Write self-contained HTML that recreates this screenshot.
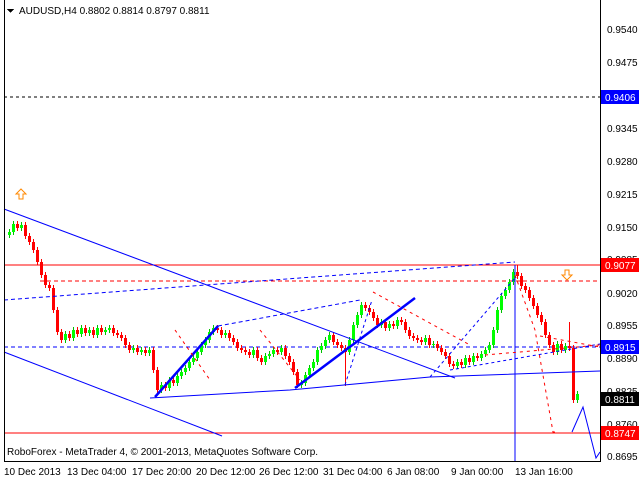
<!DOCTYPE html>
<html><head><meta charset="utf-8"><style>
body{margin:0;background:#fff;width:640px;height:480px;overflow:hidden}
svg text{font-family:"Liberation Sans",sans-serif;font-size:10px}
</style></head><body>
<svg width="640" height="480" xmlns="http://www.w3.org/2000/svg" shape-rendering="crispEdges">
<rect width="640" height="480" fill="#fff"/>
<line x1="4" y1="97" x2="600" y2="97" stroke="#000" stroke-dasharray="3,3"/>
<line x1="4" y1="265" x2="600" y2="265" stroke="#f00"/>
<line x1="4" y1="433" x2="600" y2="433" stroke="#f00"/>
<line x1="40" y1="281" x2="600" y2="281" stroke="#f00" stroke-dasharray="4,3"/>
<line x1="4" y1="347" x2="600" y2="347" stroke="#00f" stroke-dasharray="4,3"/>
<!-- green candles -->
<path stroke="#00c000" fill="none" d="M9.5 229V238M13.5 221V235M21.5 222V231M65.5 331V343M73.5 327V341M81.5 325V337M89.5 327V336M97.5 325V338M105.5 327V335M109.5 325V333M133.5 345V353M141.5 347V355M149.5 347V356M161.5 382V393M169.5 377V391M177.5 373V386M181.5 369V379M185.5 365V375M189.5 359V371M193.5 355V365M197.5 349V361M201.5 342V355M205.5 337V348M209.5 329V343M213.5 325V335M225.5 330V338M253.5 347V358M265.5 353V365M269.5 351V359M273.5 347V357M281.5 345V355M301.5 380V388M305.5 372V386M309.5 365V378M313.5 359V371M317.5 347V365M321.5 343V353M325.5 337V349M329.5 332V343M349.5 337V355M353.5 322V343M357.5 312V328M361.5 302V318M381.5 319V328M389.5 321V331M397.5 317V329M425.5 335V345M433.5 341V348M457.5 359V369M465.5 355V368M473.5 353V365M481.5 351V361M485.5 347V357M489.5 342V353M493.5 327V348M497.5 307V333M501.5 293V313M505.5 287V299M509.5 279V293M513.5 269V285M557.5 341V355M565.5 343V353M577.5 391V403"/>
<path fill="#00ff00" d="M8 232h3v3h-3zM12 224h3v8h-3zM20 225h3v3h-3zM64 334h3v6h-3zM72 330h3v8h-3zM80 328h3v6h-3zM88 330h3v3h-3zM96 328h3v7h-3zM104 330h3v2h-3zM108 328h3v2h-3zM132 348h3v2h-3zM140 350h3v2h-3zM148 350h3v3h-3zM160 385h3v5h-3zM168 380h3v8h-3zM176 376h3v7h-3zM180 372h3v4h-3zM184 368h3v4h-3zM188 362h3v6h-3zM192 358h3v4h-3zM196 352h3v6h-3zM200 345h3v7h-3zM204 340h3v5h-3zM208 332h3v8h-3zM212 328h3v4h-3zM224 333h3v2h-3zM252 350h3v5h-3zM264 356h3v6h-3zM268 354h3v2h-3zM272 350h3v4h-3zM280 348h3v4h-3zM300 383h3v2h-3zM304 375h3v8h-3zM308 368h3v7h-3zM312 362h3v6h-3zM316 350h3v12h-3zM320 346h3v4h-3zM324 340h3v6h-3zM328 335h3v5h-3zM348 340h3v12h-3zM352 325h3v15h-3zM356 315h3v10h-3zM360 305h3v10h-3zM380 322h3v3h-3zM388 324h3v4h-3zM396 320h3v6h-3zM424 338h3v4h-3zM432 344h3v1h-3zM456 362h3v4h-3zM464 358h3v7h-3zM472 356h3v6h-3zM480 354h3v4h-3zM484 350h3v4h-3zM488 345h3v5h-3zM492 330h3v15h-3zM496 310h3v20h-3zM500 296h3v14h-3zM504 290h3v6h-3zM508 282h3v8h-3zM512 272h3v10h-3zM556 344h3v8h-3zM564 346h3v4h-3zM576 394h3v6h-3z"/>
<!-- red candles -->
<path stroke="#f00" fill="none" d="M17.5 221V231M25.5 222V239M29.5 233V245M33.5 239V253M37.5 247V265M41.5 259V278M45.5 272V288M49.5 282V291M53.5 285V313M57.5 307V335M61.5 329V343M69.5 331V341M77.5 327V337M85.5 325V336M93.5 327V338M101.5 325V335M113.5 325V336M117.5 330V338M121.5 332V341M125.5 335V348M129.5 342V353M137.5 345V355M145.5 347V356M153.5 347V373M157.5 367V393M165.5 382V391M173.5 377V386M217.5 325V333M221.5 327V338M229.5 330V341M233.5 335V345M237.5 339V351M241.5 345V353M245.5 347V355M249.5 349V358M257.5 347V361M261.5 355V365M277.5 347V355M285.5 345V359M289.5 353V365M293.5 359V375M297.5 369V388M333.5 332V345M337.5 339V348M341.5 342V351M345.5 345V386M365.5 302V311M369.5 305V315M373.5 309V321M377.5 315V328M385.5 319V331M393.5 321V329M401.5 317V325M405.5 319V333M409.5 327V339M413.5 333V341M417.5 335V343M421.5 337V345M429.5 335V348M437.5 341V351M441.5 345V355M445.5 349V359M449.5 353V367M453.5 361V369M461.5 359V368M469.5 355V365M477.5 353V361M517.5 265V279M521.5 273V289M525.5 283V293M529.5 287V301M533.5 295V309M537.5 303V318M541.5 312V325M545.5 319V338M549.5 332V348M553.5 342V355M561.5 341V353M569.5 322V351M573.5 345V403"/>
<path fill="#f00" d="M16 224h3v4h-3zM24 225h3v11h-3zM28 236h3v6h-3zM32 242h3v8h-3zM36 250h3v12h-3zM40 262h3v13h-3zM44 275h3v10h-3zM48 285h3v3h-3zM52 288h3v22h-3zM56 310h3v22h-3zM60 332h3v8h-3zM68 334h3v4h-3zM76 330h3v4h-3zM84 328h3v5h-3zM92 330h3v5h-3zM100 328h3v4h-3zM112 328h3v5h-3zM116 333h3v2h-3zM120 335h3v3h-3zM124 338h3v7h-3zM128 345h3v5h-3zM136 348h3v4h-3zM144 350h3v3h-3zM152 350h3v20h-3zM156 370h3v20h-3zM164 385h3v3h-3zM172 380h3v3h-3zM216 328h3v2h-3zM220 330h3v5h-3zM228 333h3v5h-3zM232 338h3v4h-3zM236 342h3v6h-3zM240 348h3v2h-3zM244 350h3v2h-3zM248 352h3v3h-3zM256 350h3v8h-3zM260 358h3v4h-3zM276 350h3v2h-3zM284 348h3v8h-3zM288 356h3v6h-3zM292 362h3v10h-3zM296 372h3v13h-3zM332 335h3v7h-3zM336 342h3v3h-3zM340 345h3v3h-3zM344 348h3v4h-3zM364 305h3v3h-3zM368 308h3v4h-3zM372 312h3v6h-3zM376 318h3v7h-3zM384 322h3v6h-3zM392 324h3v2h-3zM400 320h3v2h-3zM404 322h3v8h-3zM408 330h3v6h-3zM412 336h3v2h-3zM416 338h3v2h-3zM420 340h3v2h-3zM428 338h3v7h-3zM436 344h3v4h-3zM440 348h3v4h-3zM444 352h3v4h-3zM448 356h3v8h-3zM452 364h3v2h-3zM460 362h3v3h-3zM468 358h3v4h-3zM476 356h3v2h-3zM516 272h3v4h-3zM520 276h3v10h-3zM524 286h3v4h-3zM528 290h3v8h-3zM532 298h3v8h-3zM536 306h3v9h-3zM540 315h3v7h-3zM544 322h3v13h-3zM548 335h3v10h-3zM552 345h3v7h-3zM560 344h3v6h-3zM568 346h3v2h-3zM572 348h3v52h-3z"/>
<g fill="none" stroke="#00f" shape-rendering="auto">
<line x1="4" y1="209" x2="455" y2="378"/>
<line x1="4" y1="352" x2="222" y2="436"/>
<line x1="4" y1="300" x2="515" y2="262" stroke-dasharray="4,3"/>
<polyline points="150,398 290,390 430,377 600,371"/>
<line x1="155" y1="397" x2="218" y2="326" stroke-width="2.5"/>
<line x1="295" y1="388" x2="415" y2="298" stroke-width="2.5"/>
<line x1="218" y1="326" x2="360" y2="300" stroke-dasharray="4,3"/>
<line x1="430" y1="377" x2="515" y2="278" stroke-dasharray="3,3"/>
<line x1="450" y1="370" x2="600" y2="344" stroke-dasharray="3,3"/>
<line x1="345" y1="385" x2="372" y2="300" stroke-dasharray="3,3"/>
<polyline points="572,432 583,407 596,458 600,452"/>
<line x1="515" y1="265" x2="515" y2="461"/>
</g>
<g fill="none" stroke="#f00" stroke-dasharray="3,4" shape-rendering="auto">
<polyline points="515,275 535,330 553,432 557,432"/>
<line x1="373" y1="292" x2="470" y2="345"/>
<line x1="260" y1="330" x2="300" y2="380"/>
<line x1="175" y1="330" x2="210" y2="380"/>
<line x1="485" y1="355" x2="600" y2="345"/>
<line x1="540" y1="336" x2="600" y2="347"/>
</g>
<path d="M19,199 v-5 h-3 l5,-5 l5,5 h-3 v5 z" fill="#fff" stroke="#f80" shape-rendering="auto"/>
<path d="M565,270 v5 h-3 l5,5 l5,-5 h-3 v-5 z" fill="#fff" stroke="#f80" shape-rendering="auto"/>
<line x1="4.5" y1="0" x2="4.5" y2="461" stroke="#000"/>
<line x1="600.5" y1="0" x2="600.5" y2="462" stroke="#000"/>
<line x1="4" y1="461.5" x2="601" y2="461.5" stroke="#000"/>
<g fill="#000">
<text x="607" y="33">0.9540</text><text x="607" y="66">0.9475</text><text x="607" y="132">0.9345</text><text x="607" y="165">0.9280</text><text x="607" y="198">0.9215</text><text x="607" y="231">0.9150</text><text x="607" y="263">0.9085</text><text x="607" y="297">0.9020</text><text x="607" y="329">0.8955</text><text x="607" y="362">0.8890</text><text x="607" y="395">0.8825</text><text x="607" y="428">0.8760</text><text x="607" y="460">0.8695</text>
</g>
<rect x="601" y="90" width="38" height="14" fill="#00f"/><text x="605" y="101" fill="#fff">0.9406</text>
<rect x="601" y="258" width="38" height="14" fill="#f00"/><text x="605" y="269" fill="#fff">0.9077</text>
<rect x="601" y="340" width="38" height="14" fill="#00f"/><text x="605" y="351" fill="#fff">0.8915</text>
<rect x="601" y="392" width="38" height="14" fill="#000"/><text x="605" y="403" fill="#fff">0.8811</text>
<rect x="601" y="426" width="38" height="14" fill="#f00"/><text x="605" y="437" fill="#fff">0.8747</text>
<g fill="#000">
<text x="4" y="475">10 Dec 2013</text><text x="67" y="475">13 Dec 04:00</text><text x="132" y="475">17 Dec 20:00</text><text x="196" y="475">20 Dec 12:00</text><text x="259" y="475">26 Dec 12:00</text><text x="323" y="475">31 Dec 04:00</text><text x="387" y="475">6 Jan 08:00</text><text x="451" y="475">9 Jan 00:00</text><text x="515" y="475">13 Jan 16:00</text>
</g>
<path d="M7,9 h7 l-3.5,4 z" fill="#000"/>
<text x="19" y="14" fill="#000">AUDUSD,H4  0.8802 0.8814 0.8797 0.8811</text>
<text x="7" y="455" fill="#000">RoboForex - MetaTrader 4, © 2001-2013, MetaQuotes Software Corp.</text>
</svg>
</body></html>
